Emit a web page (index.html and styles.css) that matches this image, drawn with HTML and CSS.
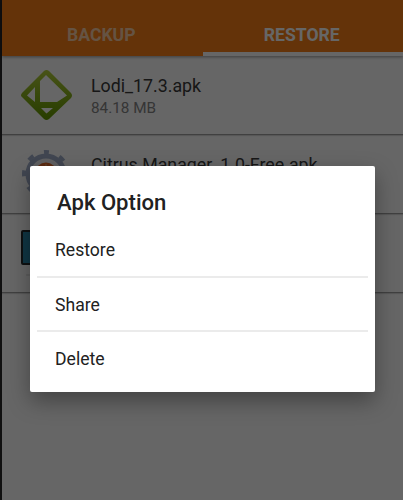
FILE: index.html
```html
<!DOCTYPE html>
<html lang="en">
  <head>
    <meta charset="utf-8" />
    <title>Apk Backup</title>
    <link rel="stylesheet" href="styles.css">
  </head>
  <body>
    <div class="screen">
      <nav class="tabs">
        <div class="tab">BACKUP</div>
        <div class="tab active">RESTORE</div>
      </nav>
      <ul class="apk-list">
        <li class="apk">
          <svg class="icon" viewBox="0 0 52 52">
            <defs>
              <linearGradient id="green" x1="0" y1="0" x2="0" y2="1">
                <stop offset="0" stop-color="#b4cf3c" />
                <stop offset="1" stop-color="#629800" />
              </linearGradient>
            </defs>
            <path fill="url(#green)" fill-rule="evenodd" d="M24 2Q26.500 0 29 2L51 24Q53 26.500 51 29L29 50Q26.500 52 24 50L2 28Q0 26.500 2 24ZM26 6 20 12V33H37L47 26.500ZM15 18 7 26.500 15 33ZM21 39 26.500 44.500 33 39Z" />
          </svg>
          <div class="info">
            <div class="name">Lodi_17.3.apk</div>
            <div class="size">84.18 MB</div>
          </div>
        </li>
        <li class="apk">
          <svg class="icon" viewBox="0 0 52 52">
            <circle cx="26" cy="26" r="22" fill="none" stroke="#a2b0cb" stroke-width="4" stroke-dasharray="6 11.280" stroke-dashoffset="3" transform="rotate(-90 26 26)" />
            <circle cx="26" cy="26" r="18" fill="#f1f1f4" stroke="#a2b0cb" stroke-width="5" />
            <circle cx="26" cy="25" r="10.500" fill="#e56b28" />
            <path fill="none" stroke="#f4b078" stroke-width="1" d="M26 25V16M26 25 20 18M26 25 32 18" />
          </svg>
          <div class="info">
            <div class="name">Citrus Manager_1.0-Free.apk</div>
          </div>
        </li>
        <li class="apk">
          <svg class="icon" viewBox="0 0 52 52">
            <rect x="2" y="4" width="49" height="33" rx="1" fill="#2887aa" stroke="#24282b" stroke-width="2" />
            <path stroke="#d2d2d2" d="M6 48H46" />
          </svg>
        </li>
      </ul>
    </div>

    <div class="scrim">
      <div class="dialog">
        <h1>Apk Option</h1>
        <ul class="options">
          <li>Restore</li>
          <li>Share</li>
          <li>Delete</li>
        </ul>
      </div>
    </div>
  </body>
</html>
```

FILE: styles.css
```css
* {
  box-sizing: border-box;
}
body {
  margin: 0;
  height: 500px;
  overflow: hidden;
  background: #28282a;
  font-family: Roboto, sans-serif;
}
ul {
  list-style: none;
  margin: 0;
  padding: 0;
}
.screen {
  height: 500px;
  margin-left: 2px;
  background: #fff;
}
.tabs {
  display: flex;
  height: 56px;
  background: #fb7f17;
  box-shadow: 0 1px 3px rgba(0, 0, 0, 0.4);
}
.tab {
  flex: 1;
  padding: 14px 2px 0 0;
  text-align: center;
  font-size: 17.6px;
  line-height: 42px;
  font-weight: bold;
  color: #fccfa7;
}
.tab.active {
  color: #fff;
  border-bottom: 4px solid #fff;
}
.apk {
  display: flex;
  height: 79px;
  padding: 13px 0 0 18px;
  border-bottom: 1px solid #a0a0a0;
  box-shadow: 0 1px 1px rgba(0, 0, 0, 0.15);
}
.icon {
  width: 52px;
  height: 52px;
  overflow: visible;
}
.info {
  margin-left: 19px;
  padding-top: 6px;
}
.name {
  font-size: 17.8px;
  line-height: 22px;
  color: #3a3a3a;
}
.size {
  font-size: 15.3px;
  line-height: 22px;
  color: #868686;
}
.scrim {
  position: absolute;
  top: 0;
  left: 0;
  width: 403px;
  height: 500px;
  padding: 166px 0 0 30px;
  background: rgba(0, 0, 0, 0.6);
}
.dialog {
  width: 344.5px;
  height: 225.5px;
  padding: 20px 7px 0;
  background: #fff;
  border-radius: 2px;
  box-shadow: 0 9px 22px rgba(0, 0, 0, 0.35);
}
.dialog h1 {
  margin: 0 0 5px 20px;
  font-size: 22.1px;
  line-height: 32px;
  font-weight: 500;
  color: #212121;
}
.options li {
  height: 54.5px;
  padding-left: 18px;
  font-size: 17.6px;
  line-height: 54px;
  color: #212121;
  border-bottom: 2px solid #ebebeb;
}
.options li:last-child {
  border-bottom: none;
}
```
